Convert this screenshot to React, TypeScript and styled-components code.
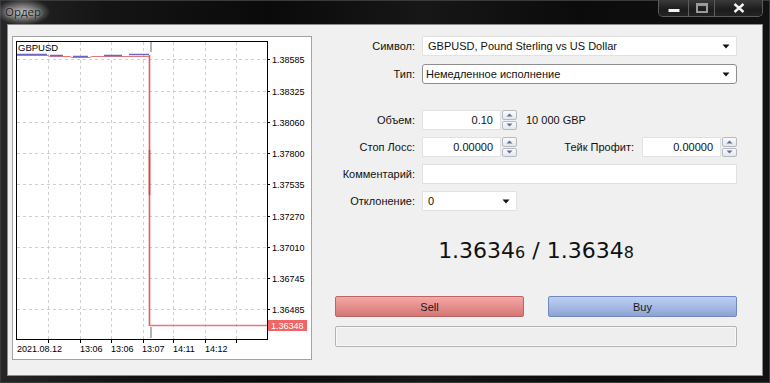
import React from "react";
import styled, { createGlobalStyle } from "styled-components";

const GlobalStyle = createGlobalStyle`
  html, body {
    margin: 0;
    padding: 0;
  }
  body {
    width: 770px;
    height: 383px;
    overflow: hidden;
    background: #0b0b0b;
    font-family: "Liberation Sans", Arial, sans-serif;
  }
`;

const priceLevels: [number, string][] = [
  [59, "1.38585"],
  [91, "1.38325"],
  [122, "1.38060"],
  [153, "1.37800"],
  [184, "1.37535"],
  [216, "1.37270"],
  [247, "1.37010"],
  [278, "1.36745"],
  [309, "1.36485"],
];

const timeGrid = [48, 80, 111, 143, 173, 205, 236];

const timeLabels: [number, string][] = [
  [17, "2021.08.12"],
  [80, "13:06"],
  [111, "13:06"],
  [142, "13:07"],
  [173, "14:11"],
  [205, "14:12"],
];

// bid/ask ticks drawn over the price line
const askTicks: [number, number, number][] = [
  [17, 47, 55],
  [50, 63, 56],
  [73, 88, 57],
  [104, 122, 56],
  [129, 149, 55],
];

function Chart() {
  return (
    <svg width="298" height="322" viewBox="13 37 298 322">
      <rect x="13" y="37" width="298" height="322" fill="#fff" />
      {priceLevels.map(([y]) => (
        <line key={"h" + y} x1="17" x2="267" y1={y + 0.5} y2={y + 0.5} stroke="#cfcfcf" strokeDasharray="3 3" />
      ))}
      {timeGrid.map((x) => (
        <line key={"v" + x} x1={x + 0.5} x2={x + 0.5} y1="42" y2="339" stroke="#cfcfcf" strokeDasharray="3 3" />
      ))}
      <line x1="151" x2="151" y1="42" y2="52" stroke="#b4b4b4" strokeWidth="2" />
      <line x1="151" x2="151" y1="327" y2="338" stroke="#b4b4b4" strokeWidth="2" />

      <polyline
        points="17,55.5 48,55.5 50,56.5 70,56.5 72,57.5 90,57.5 92,56.5 149.5,56.5"
        fill="none"
        stroke="#e07a7a"
        strokeWidth="1"
      />
      {askTicks.map(([x1, x2, y]) => (
        <line key={"a" + x1} x1={x1} x2={x2} y1={y - 0.5} y2={y - 0.5} stroke="#6f64c4" strokeWidth="1.5" />
      ))}
      <line x1="149.5" x2="149.5" y1="55" y2="326" stroke="#e85a5a" strokeWidth="1.6" />
      <line x1="149.5" x2="149.5" y1="150" y2="195" stroke="#c84848" strokeWidth="1.6" />
      <line x1="150" x2="267" y1="325.5" y2="325.5" stroke="#f07676" strokeWidth="1.4" />

      <rect x="16.5" y="41.5" width="251" height="298" fill="none" stroke="#000" />

      <text x="18" y="50.5" fontSize="9.5" fill="#000" fontFamily="Liberation Sans, Arial, sans-serif">
        GBPUSD
      </text>

      {priceLevels.map(([y, label]) => (
        <g key={"p" + y}>
          <line x1="267" x2="270" y1={y + 0.5} y2={y + 0.5} stroke="#000" />
          <text x="272" y={y + 3.5} fontSize="9" fill="#000" fontFamily="Liberation Sans, Arial, sans-serif">
            {label}
          </text>
        </g>
      ))}

      <rect x="268" y="320" width="39" height="11" fill="#f06565" />
      <text x="271" y="329" fontSize="9" fill="#fff" fontFamily="Liberation Sans, Arial, sans-serif">
        1.36348
      </text>

      {timeGrid.map((x) => (
        <line key={"t" + x} x1={x + 0.5} x2={x + 0.5} y1="340" y2="343" stroke="#000" />
      ))}
      {timeLabels.map(([x, label], i) => (
        <text key={"l" + i} x={x} y="351.5" fontSize="9" fill="#000" fontFamily="Liberation Sans, Arial, sans-serif">
          {label}
        </text>
      ))}
    </svg>
  );
}

function MinIcon() {
  return (
    <svg width="12" height="12" viewBox="0 0 12 12">
      <rect x="0.5" y="7" width="11" height="3" fill="#f2f2f2" />
    </svg>
  );
}

function MaxIcon() {
  return (
    <svg width="12" height="12" viewBox="0 0 12 12">
      <rect x="1" y="2" width="10" height="8" fill="none" stroke="#9a9a9a" strokeWidth="2" />
      <rect x="2" y="2" width="8" height="2" fill="#9a9a9a" />
    </svg>
  );
}

function CloseIcon() {
  return (
    <svg width="12" height="10" viewBox="0 0 12 10">
      <path d="M1.5 1 L10.5 9 M10.5 1 L1.5 9" stroke="#f2f2f2" strokeWidth="2.4" />
    </svg>
  );
}

function DropArrow() {
  return (
    <svg width="8" height="5" viewBox="0 0 8 5">
      <path d="M0.5 0.5 H7.5 L4 4.5 Z" fill="#111" />
    </svg>
  );
}

function Spinner() {
  return (
    <SpinBox>
      <SpinHalf>
        <svg width="7" height="4" viewBox="0 0 7 4">
          <path d="M0.5 3.5 L3.5 0.5 L6.5 3.5 Z" fill="#5b6f98" />
        </svg>
      </SpinHalf>
      <SpinHalf>
        <svg width="7" height="4" viewBox="0 0 7 4">
          <path d="M0.5 0.5 L3.5 3.5 L6.5 0.5 Z" fill="#5b6f98" />
        </svg>
      </SpinHalf>
    </SpinBox>
  );
}

function App() {
  return (
    <>
      <GlobalStyle />
      <Window>
        <TitleBar>
          <Caption>Ордер</Caption>
          <CaptionButtons>
            <CaptionButton $width={29}>
              <MinIcon />
            </CaptionButton>
            <CaptionButton $width={25}>
              <MaxIcon />
            </CaptionButton>
            <CaptionButton $width={47}>
              <CloseIcon />
            </CaptionButton>
          </CaptionButtons>
        </TitleBar>

        <Client>
          <ChartPanel>
            <Chart />
          </ChartPanel>

          <Form>
            <Fields $rowGap={8}>
              <Label>Символ:</Label>
              <Select>
                <span>GBPUSD, Pound Sterling vs US Dollar</span>
                <DropArrow />
              </Select>
              <Label>Тип:</Label>
              <Select $framed>
                <span>Немедленное исполнение</span>
                <DropArrow />
              </Select>
            </Fields>

            <Fields $rowGap={7} $top={26}>
              <Label>Объем:</Label>
              <Inline>
                <NumberField>0.10</NumberField>
                <Spinner />
                <Note>10 000 GBP</Note>
              </Inline>

              <Label>Стоп Лосс:</Label>
              <Inline>
                <NumberField>0.00000</NumberField>
                <Spinner />
                <Grow />
                <InlineLabel>Тейк Профит:</InlineLabel>
                <NumberField>0.00000</NumberField>
                <Spinner />
              </Inline>

              <Label>Комментарий:</Label>
              <TextField />

              <Label>Отклонение:</Label>
              <Select $width={95}>
                <span>0</span>
                <DropArrow />
              </Select>
            </Fields>

            <Actions>
              <Quote>
                1.3634<Small>6</Small> / 1.3634<Small>8</Small>
              </Quote>
              <ButtonRow>
                <TradeButton $kind="sell">Sell</TradeButton>
                <TradeButton $kind="buy">Buy</TradeButton>
              </ButtonRow>
              <Progress />
            </Actions>
          </Form>
        </Client>
      </Window>
    </>
  );
}

const Window = styled.div`
  width: 770px;
  height: 383px;
  box-sizing: border-box;
  display: flex;
  flex-direction: column;
  background: linear-gradient(
    90deg,
    #262626 0%,
    #141414 14%,
    #0a0a0a 35%,
    #171717 55%,
    #0b0b0b 75%,
    #121212 100%
  );
  box-shadow: inset 0 0 0 1px #3a3a3a;
`;

const TitleBar = styled.div`
  height: 24px;
  flex: none;
  display: flex;
  justify-content: space-between;
  align-items: flex-start;
  padding: 0 7px 0 0;
`;

const Caption = styled.div`
  font-family: "Open Sans", "Noto Sans", sans-serif;
  font-size: 11.5px;
  line-height: 24px;
  padding: 0 14px 0 5px;
  color: #222;
  background: radial-gradient(
    ellipse 50% 55% at 42% 50%,
    rgba(200, 200, 200, 0.9) 0%,
    rgba(160, 160, 160, 0.7) 45%,
    rgba(90, 90, 90, 0) 100%
  );
  text-shadow: 0 0 3px rgba(225, 225, 225, 0.85);
`;

const CaptionButtons = styled.div`
  display: flex;
  height: 17px;
  border: 1px solid #5c5c5c;
  border-top: none;
  border-radius: 0 0 5px 5px;
  overflow: hidden;
  box-sizing: border-box;
`;

const CaptionButton = styled.div<{ $width: number }>`
  width: ${(p) => p.$width}px;
  height: 100%;
  display: flex;
  align-items: center;
  justify-content: center;
  background: linear-gradient(#3a3a3a, #1c1c1c 60%, #242424);
  & + & {
    border-left: 1px solid #5c5c5c;
  }
`;

const Client = styled.div`
  flex: 1;
  margin: 0 7px 7px;
  display: flex;
  padding: 11px 0 0 4px;
  background: #f0f0f0;
  border: 1px solid #8c8c8c;
  box-sizing: border-box;
`;

const ChartPanel = styled.div`
  width: 300px;
  height: 324px;
  flex: none;
  box-sizing: border-box;
  border: 1px solid #a3a3a3;
  background: #fff;

  svg {
    display: block;
  }
`;

const Form = styled.div`
  flex: 1;
  display: flex;
  flex-direction: column;
  padding-right: 25px;
  font-size: 11px;
  color: #111;
`;

const Fields = styled.div<{ $rowGap: number; $top?: number }>`
  display: grid;
  grid-template-columns: 103px 1fr;
  column-gap: 7px;
  row-gap: ${(p) => p.$rowGap}px;
  align-items: center;
  margin-top: ${(p) => p.$top || 0}px;
`;

const Label = styled.div`
  text-align: right;
  white-space: nowrap;
`;

const Select = styled.div<{ $framed?: boolean; $width?: number }>`
  width: ${(p) => (p.$width ? `${p.$width}px` : "100%")};
  height: 20px;
  box-sizing: border-box;
  display: flex;
  align-items: center;
  justify-content: space-between;
  padding: ${(p) => (p.$framed ? "0 6px 0 3px" : "0 6px 0 5px")};
  background: #fff;
  border: 1px solid ${(p) => (p.$framed ? "#8e8e8e" : "#e1e1e1")};
  border-radius: ${(p) => (p.$framed ? "3px" : "1px")};
  white-space: nowrap;
`;

const Inline = styled.div`
  display: flex;
  align-items: center;
  height: 20px;
`;

const NumberField = styled.div`
  width: 79px;
  height: 20px;
  box-sizing: border-box;
  padding-right: 7px;
  display: flex;
  align-items: center;
  justify-content: flex-end;
  background: #fff;
  border: 1px solid #e1e1e1;
`;

const SpinBox = styled.div`
  width: 15px;
  height: 20px;
  margin-left: 1px;
  display: flex;
  flex-direction: column;
  gap: 1px;
  flex: none;
`;

const SpinHalf = styled.div`
  flex: 1;
  display: flex;
  align-items: center;
  justify-content: center;
  border: 1px solid #b4b9c2;
  border-radius: 2px;
  background: linear-gradient(#fbfbfb, #e4e7ec);
  svg {
    display: block;
  }
`;

const Note = styled.span`
  margin-left: 9px;
`;

const Grow = styled.div`
  flex: 1;
`;

const InlineLabel = styled.span`
  margin-right: 8px;
  white-space: nowrap;
`;

const TextField = styled.div`
  height: 20px;
  box-sizing: border-box;
  background: #fff;
  border: 1px solid #e1e1e1;
`;

const Actions = styled.div`
  display: flex;
  flex-direction: column;
  padding-left: 23px;
`;

const Quote = styled.div`
  margin-top: 26px;
  font-family: "DejaVu Sans", Verdana, sans-serif;
  font-size: 22px;
  line-height: 28px;
  text-align: center;
  color: #111;
`;

const Small = styled.span`
  font-size: 16px;
`;

const ButtonRow = styled.div`
  margin-top: 29px;
  display: grid;
  grid-template-columns: 1fr 1fr;
  column-gap: 24px;
`;

const TradeButton = styled.div<{ $kind: "sell" | "buy" }>`
  height: 21px;
  box-sizing: border-box;
  display: flex;
  align-items: center;
  justify-content: center;
  border-radius: 2px;
  color: #1a1a1a;
  border: 1px solid ${(p) => (p.$kind === "sell" ? "#bb6666" : "#7189bf")};
  background: ${(p) =>
    p.$kind === "sell"
      ? "linear-gradient(#f5a7a5, #e58f8d 50%, #d27674)"
      : "linear-gradient(#bccff3, #a7bbe6 50%, #8ea3d2)"};
`;

const Progress = styled.div`
  margin-top: 9px;
  height: 21px;
  box-sizing: border-box;
  border: 1px solid #b3b3b3;
  border-radius: 2px;
  background: #eeeeee;
  box-shadow: inset 0 0 0 1px #f8f8f8;
`;

export default App;
